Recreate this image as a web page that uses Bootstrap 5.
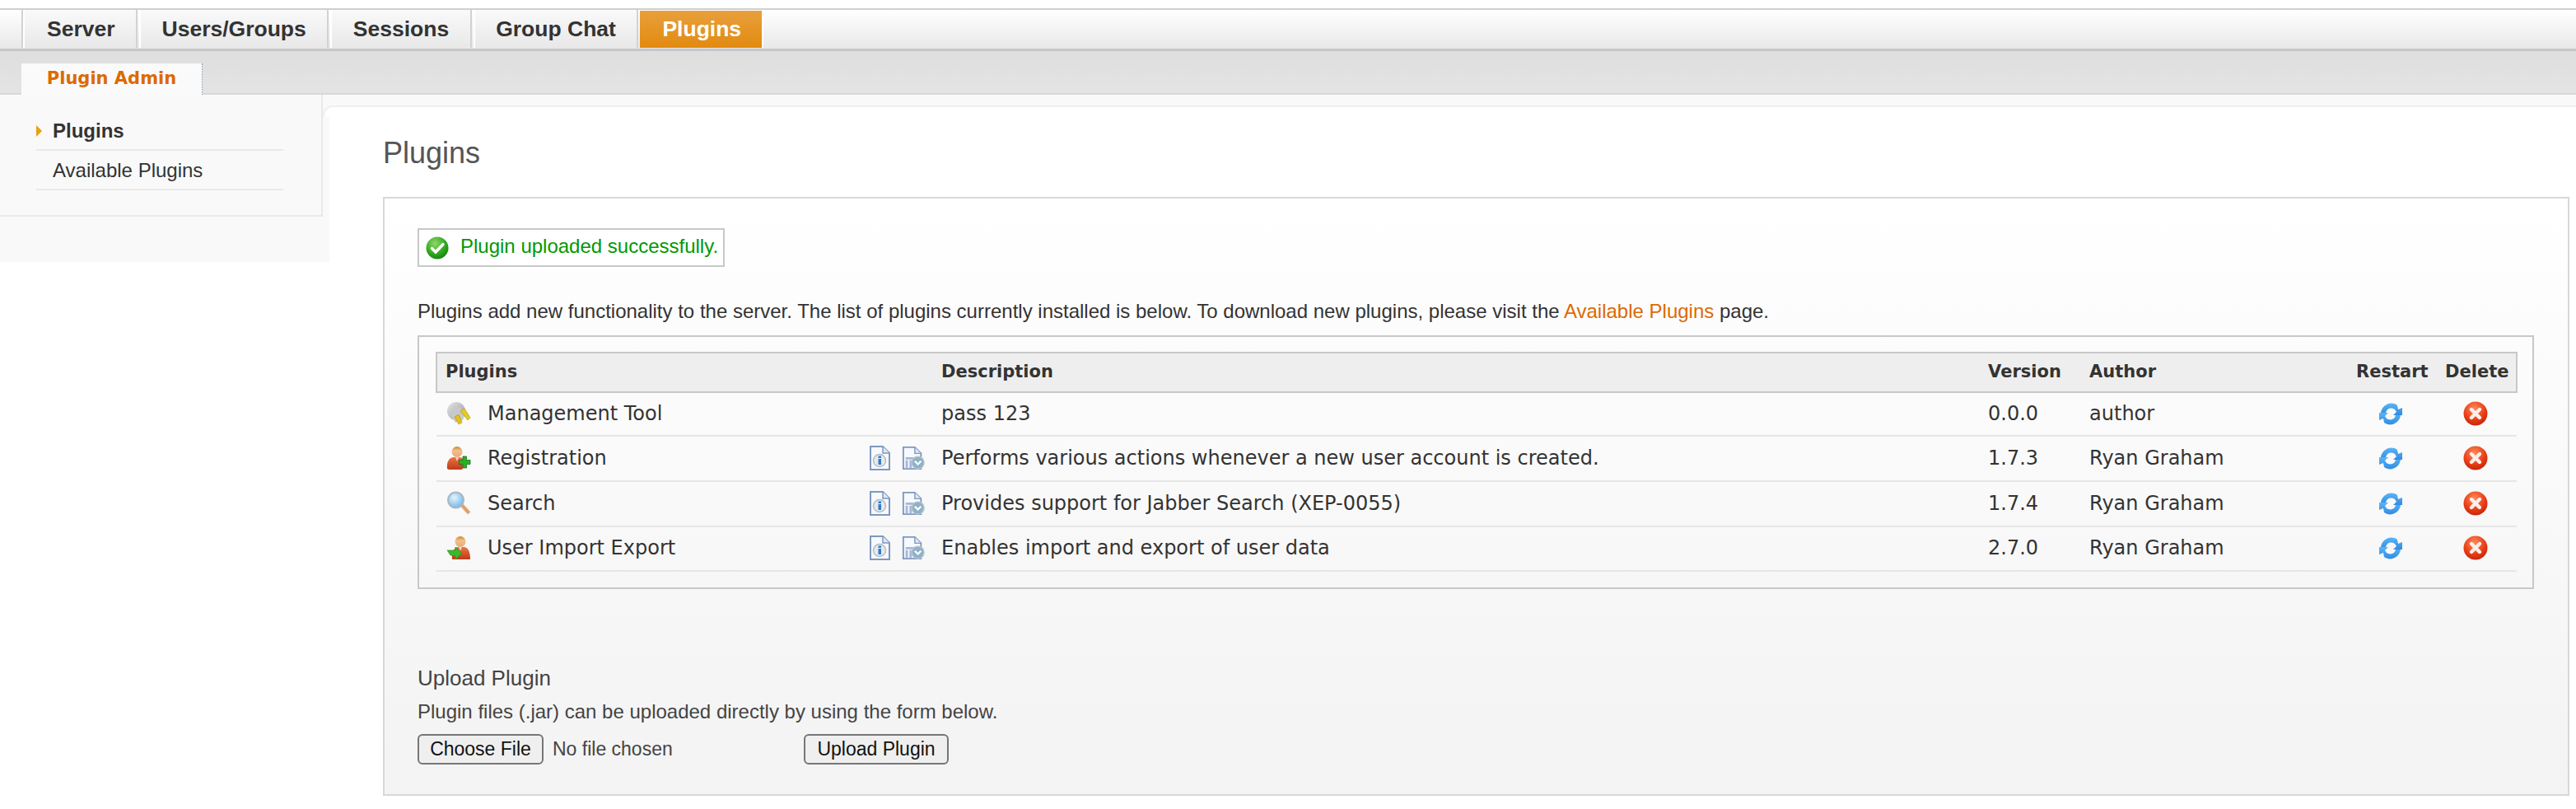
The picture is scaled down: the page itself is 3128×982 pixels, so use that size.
<!DOCTYPE html>
<html lang="en">
<head>
<meta charset="utf-8">
<title>Plugins</title>
<link href="https://cdn.jsdelivr.net/npm/bootstrap@5.3.0/dist/css/bootstrap.min.css" rel="stylesheet">
<style>
html,body{height:982px;overflow:hidden;background:#fff}
body{font-family:"Liberation Sans",Arial,sans-serif;font-size:24px;color:#333}
.topbar{margin-top:10px;height:52px;padding-left:28px;border-top:2px solid #cfcfcf;border-bottom:3px solid #c6c6c6;background:linear-gradient(#fff,#e8e8e8)}
.toptab{display:block;height:46px;line-height:46px;margin-right:2px;padding:0 25.5px;font-weight:700;font-size:26.5px;color:#333;text-decoration:none;background:linear-gradient(#fafafa,#e8e8e8);border-left:2px solid #fff;border-right:2px solid #d2d2d2}
.toptab:first-child{padding-left:27px;box-shadow:-2px 0 0 #d2d2d2}
.toptab-on{color:#fff;height:45px;line-height:44px;margin-top:1px;padding:0 25px 0 27px;background:linear-gradient(#e8a03c,#e28a10);border:0;box-shadow:2px 0 0 #fff}
.subbar{height:53px;padding-left:26px;background:linear-gradient(#dedede,#e4e4e4);border-bottom:2px solid #d8d8d8}
.subtab{display:block;width:220px;height:38px;line-height:36px;text-align:center;font-family:"DejaVu Sans",Verdana,sans-serif;font-weight:700;font-size:21px;color:#dc6a00;background:#fafafa;text-decoration:none;border-right:1px dotted #7d8f9f;position:relative;top:15px}
.sidecol{width:400px;height:203px;background:#f9f9f9;flex:none}
.sidenav{width:392px;height:148px;padding:20px 0 0 44px;border-right:2px solid #e9e9e9;border-bottom:2px solid #e9e9e9;border-top:0}
.sidelink{display:block;width:300px;height:48px;line-height:47px;padding-left:20px;color:#333;text-decoration:none;border-bottom:2px solid #e9e9e9;font-size:24px;position:relative}
.sidelink-on{font-weight:700}
.sidelink-on::before{content:"";position:absolute;left:0;top:17px;border-left:7px solid #e7a211;border-top:7px solid transparent;border-bottom:7px solid transparent}
.rightcol{min-width:0;padding-top:15px;background:linear-gradient(#f9f9f9 13px,#f0f0f0 13px,#f0f0f0 15px,#fff 15px);position:relative}
.rightcol::before{content:"";position:absolute;left:-8px;top:13px;width:18px;height:14px;background:#fff;border-top:2px solid #f0f0f0;border-left:2px solid #f0f0f0;border-top-left-radius:12px}
.pagetitle{font-size:36px;font-weight:400;line-height:42px;color:#555;margin:35px 0 32px 65px}
.outerbox{margin-left:65px;width:2655px;height:727px;padding:36px 40px 0;border:2px solid #d8d8d8;background:linear-gradient(#fff,#f3f3f3)}
.msgbox{display:inline-flex;align-items:center;height:47px;padding:0 6px 0 8px;border:2px solid #c8c8c8;background:#fff;color:#090;gap:14px;font-size:24px;line-height:1;vertical-align:top}
.msgtext{margin-bottom:3px}
.intro{margin:38px 0 0;height:32px;line-height:32px;font-size:24px;color:#333}
.intro a{color:#dc6a00;text-decoration:none}
.tablebox{margin-top:13px;width:2570px;height:308px;padding:18px 20px 0;border:2px solid #c8c8c8}
.plugtable{width:2526px;margin:0;table-layout:fixed;border-collapse:collapse;font-family:"DejaVu Sans",Verdana,sans-serif;font-size:24px;--bs-table-bg:transparent}
.plugtable th{height:48px;padding:0 10px;background:#eee;color:#333;font-weight:700;font-size:21px;border-top:2px solid #c8c8c8;border-bottom:2px solid #c8c8c8;vertical-align:middle;white-space:nowrap}
.plugtable th:first-child{border-left:2px solid #c8c8c8}
.plugtable th:last-child{border-right:2px solid #c8c8c8}
.plugtable td{height:55px;padding:0 10px 2px;color:#333;border-bottom:2px solid #e6e6e6;vertical-align:middle;white-space:nowrap;background:transparent}
.plugtable tbody tr:first-child td{height:53px}
.plugtable tbody tr:last-child td{height:54px}
.plugtable td:first-child{padding-left:12px;padding-right:0}
.plugtable td:nth-last-child(-n+2){padding:0 12px 2px 8px}
.ico-main{width:30px;height:30px;display:block}
.ico-doc{width:28px;height:30px;display:block}
.ico-act{width:30px;height:30px;display:block;margin:0 auto}
.uptitle{margin:91px 0 0;font-size:26px;line-height:34px;color:#444;font-weight:400}
.updesc{margin:8px 0 0;font-size:24px;line-height:32px;color:#444}
.upfile{width:469px;font:23px "Liberation Sans",Arial,sans-serif;color:#444;padding:0;border:0}
.upfile::file-selector-button{height:37px;width:153px;margin-right:11px;font:23px "Liberation Sans",Arial,sans-serif;color:#111;background:#efefef;border:2px solid #767676;border-radius:6px;padding:0}
.upbtn{width:176px;height:37px;padding:0;font-size:23px;line-height:1;color:#111;background:#efefef;border:2px solid #767676;border-radius:6px}
.upform{margin-top:11px}
</style>
</head>
<body>
<svg width="0" height="0" class="d-block" aria-hidden="true">
<defs>
<radialGradient id="gGreen" cx=".4" cy=".3" r=".8"><stop offset="0" stop-color="#8fd86a"/><stop offset=".6" stop-color="#2fa51e"/><stop offset="1" stop-color="#0c7a12"/></radialGradient>
<radialGradient id="gRed" cx=".45" cy=".3" r=".8"><stop offset="0" stop-color="#ff8a5a"/><stop offset=".6" stop-color="#e63a14"/><stop offset="1" stop-color="#b81e08"/></radialGradient>
<radialGradient id="gLens" cx=".4" cy=".35" r=".7"><stop offset="0" stop-color="#e2f4ff"/><stop offset="1" stop-color="#71b4e6"/></radialGradient>
<linearGradient id="gBlue" x1="0" y1="0" x2="0" y2="1"><stop offset="0" stop-color="#5ab4f4"/><stop offset="1" stop-color="#2f8ce4"/></linearGradient>
<linearGradient id="gSkin" x1="0" y1="0" x2="0" y2="1"><stop offset="0" stop-color="#c98a2e"/><stop offset=".4" stop-color="#f3c08e"/><stop offset="1" stop-color="#e9a877"/></linearGradient>
<linearGradient id="gShirt" x1="0" y1="0" x2="0" y2="1"><stop offset="0" stop-color="#e8753f"/><stop offset="1" stop-color="#bf3a1c"/></linearGradient>
<linearGradient id="gPlug" x1="0" y1="0" x2="1" y2="1"><stop offset="0" stop-color="#e6e6e6"/><stop offset="1" stop-color="#9a9a9a"/></linearGradient>
<symbol id="iOk" viewBox="0 0 28 28"><circle cx="14" cy="14" r="13.500" fill="url(#gGreen)"/><path d="M7.500 14.500l4.500 4.500 9-9.500" fill="none" stroke="#fff" stroke-width="3.400" stroke-linecap="round"/></symbol>
<symbol id="iDel" viewBox="0 0 30 30"><circle cx="15" cy="15" r="14.500" fill="url(#gRed)"/><path d="M10 10l10 10M20 10L10 20" stroke="#fdeee8" stroke-width="4.400" stroke-linecap="round"/></symbol>
<symbol id="iRestart" viewBox="0 0 30 30"><path d="M3 14C4 5 15-1 23 5l1 5 5-2v9H18l4-4-2-3c-5-3-10-1-11 4z" fill="url(#gBlue)"/><path d="M27 17c-1 9-12 15-20 9l-1-5-5 2v-9h11l-4 4 2 3c5 3 10 1 11-4z" fill="url(#gBlue)"/></symbol>
<symbol id="iPlug" viewBox="0 0 30 30"><circle cx="12" cy="12" r="11" fill="url(#gPlug)"/><path d="M4 14l7-9 13 8-4 10-9 3z" fill="#c9c9c9"/><path d="M10 19l5 9 4-2-4-10z" fill="#e2c21c" stroke="#a98f15" stroke-width=".6"/><path d="M17 12l9 11 3-3-7-11z" fill="#e8ca22" stroke="#a98f15" stroke-width=".6"/></symbol>
<symbol id="iUserAdd" viewBox="0 0 30 30"><circle cx="13" cy="7.500" r="6.500" fill="url(#gSkin)"/><path d="M1 28c-1-9 3-14 8-14h7c4 0 6 4 7 8l-4 7H3z" fill="url(#gShirt)"/><path d="M11 14h4l-2 5z" fill="#f3d8c0"/><path d="M20 13h4.500v4.500H29v5h-4.500V27H20v-4.500h-4.500v-5H20z" fill="#2cae25" stroke="#13761a" stroke-width=".8"/></symbol>
<symbol id="iSearch" viewBox="0 0 30 30"><path d="M16 17l10 11 3-2.500-10-11z" fill="#ec9d54" stroke="#bbb" stroke-width=".8"/><circle cx="11.500" cy="11" r="9.500" fill="url(#gLens)" stroke="#a9b6c1" stroke-width="2"/></symbol>
<symbol id="iUserExp" viewBox="0 0 30 30"><circle cx="17" cy="7.500" r="6.500" fill="url(#gSkin)"/><path d="M7 29c-1-9 3-15 7-15h7c5 0 8 5 8 15z" fill="url(#gShirt)"/><path d="M15 14h4l-2 5z" fill="#f3d8c0"/><path d="M1 18h10v-4l8 7.500-8 7.500v-4l-6-1z" fill="#3cb92b" stroke="#1f8a1f" stroke-width=".6"/></symbol>
<symbol id="iInfo" viewBox="0 0 26 30"><path d="M2 1h15l8 8v20H2z" fill="#f6f9fd" stroke="#7f98c0" stroke-width="2"/><path d="M17 1v8h8" fill="#dfe8f5" stroke="#7f98c0" stroke-width="1.500"/><circle cx="13" cy="18" r="7.500" fill="#e9e9e9" stroke="#b4bcc6" stroke-width="1.500"/><rect x="11.500" y="16" width="3.500" height="7" fill="#2a7fd6"/><rect x="11.500" y="12.500" width="3.500" height="2.500" fill="#2a7fd6"/></symbol>
<symbol id="iChange" viewBox="0 0 30 30"><path d="M2 1h15l8 8v20H2z" fill="#f6f9fd" stroke="#7f98c0" stroke-width="2"/><path d="M17 1v8h8" fill="#dfe8f5" stroke="#7f98c0" stroke-width="1.500"/><path d="M5 14h14v3H5zM5 18h3v10H5zM10 18h3v10h-3z" fill="#a7b7d6"/><circle cx="21" cy="21" r="8" fill="#8fb1c8" stroke="#b8c4cc" stroke-width="1.500"/><path d="M17 19l4 4 4-4" fill="none" stroke="#fff" stroke-width="2.500"/></symbol>
</defs>
</svg>

<nav class="topbar d-flex">
  <a class="toptab" href="#">Server</a>
  <a class="toptab" href="#">Users/Groups</a>
  <a class="toptab" href="#">Sessions</a>
  <a class="toptab" href="#">Group Chat</a>
  <a class="toptab toptab-on" href="#">Plugins</a>
</nav>
<div class="subbar"><a class="subtab" href="#">Plugin Admin</a></div>

<div class="d-flex">
  <aside class="sidecol">
    <div class="sidenav">
      <a class="sidelink sidelink-on" href="#">Plugins</a>
      <a class="sidelink" href="#">Available Plugins</a>
    </div>
  </aside>
  <main class="rightcol flex-grow-1">
    <h1 class="pagetitle">Plugins</h1>
    <section class="outerbox">
      <div class="msgbox"><svg width="28" height="28"><use href="#iOk"/></svg><span class="msgtext">Plugin uploaded successfully.</span></div>
      <p class="intro">Plugins add new functionality to the server. The list of plugins currently installed is below. To download new plugins, please visit the <a href="#">Available Plugins</a> page.</p>
      <div class="tablebox">
        <table class="table plugtable">
          <colgroup><col style="width:52px"><col style="width:462px"><col style="width:41px"><col style="width:48px"><col style="width:1271px"><col style="width:123px"><col style="width:324px"><col style="width:108px"><col style="width:97px"></colgroup>
          <thead><tr><th colspan="4">Plugins</th><th>Description</th><th>Version</th><th>Author</th><th>Restart</th><th>Delete</th></tr></thead>
          <tbody>
            <tr><td><svg class="ico-main"><use href="#iPlug"/></svg></td><td>Management Tool</td><td></td><td></td><td>pass 123</td><td>0.0.0</td><td>author</td><td><svg class="ico-act"><use href="#iRestart"/></svg></td><td><svg class="ico-act"><use href="#iDel"/></svg></td></tr>
            <tr><td><svg class="ico-main"><use href="#iUserAdd"/></svg></td><td>Registration</td><td><svg class="ico-doc"><use href="#iInfo"/></svg></td><td><svg class="ico-doc"><use href="#iChange"/></svg></td><td>Performs various actions whenever a new user account is created.</td><td>1.7.3</td><td>Ryan Graham</td><td><svg class="ico-act"><use href="#iRestart"/></svg></td><td><svg class="ico-act"><use href="#iDel"/></svg></td></tr>
            <tr><td><svg class="ico-main"><use href="#iSearch"/></svg></td><td>Search</td><td><svg class="ico-doc"><use href="#iInfo"/></svg></td><td><svg class="ico-doc"><use href="#iChange"/></svg></td><td>Provides support for Jabber Search (XEP-0055)</td><td>1.7.4</td><td>Ryan Graham</td><td><svg class="ico-act"><use href="#iRestart"/></svg></td><td><svg class="ico-act"><use href="#iDel"/></svg></td></tr>
            <tr><td><svg class="ico-main"><use href="#iUserExp"/></svg></td><td>User Import Export</td><td><svg class="ico-doc"><use href="#iInfo"/></svg></td><td><svg class="ico-doc"><use href="#iChange"/></svg></td><td>Enables import and export of user data</td><td>2.7.0</td><td>Ryan Graham</td><td><svg class="ico-act"><use href="#iRestart"/></svg></td><td><svg class="ico-act"><use href="#iDel"/></svg></td></tr>
          </tbody>
        </table>
      </div>
      <h2 class="uptitle">Upload Plugin</h2>
      <p class="updesc">Plugin files (.jar) can be uploaded directly by using the form below.</p>
      <form class="upform d-flex align-items-center" onsubmit="return false">
        <input class="upfile" type="file">
        <button class="upbtn" type="button">Upload Plugin</button>
      </form>
    </section>
  </main>
</div>
<script src="https://cdn.jsdelivr.net/npm/bootstrap@5.3.0/dist/js/bootstrap.bundle.min.js"></script>
</body>
</html>
